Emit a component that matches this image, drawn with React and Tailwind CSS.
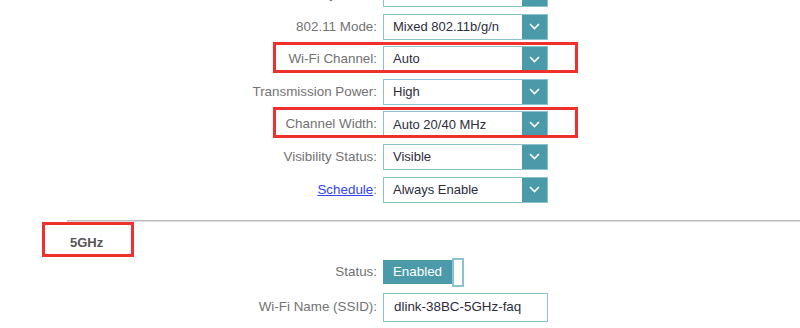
// App.jsx — router wireless settings fragment
const TEAL = 'bg-[#4a9aa9]';

function Chevron() {
  return (
    <svg width="11" height="7" viewBox="0 0 11 7" fill="none">
      <path d="M1 1l4.5 4.5L10 1" stroke="#fff" strokeWidth="1.6" />
    </svg>
  );
}

function Select({ value }) {
  return (
    <div className="flex h-[26px] w-[165px] border border-[#8cc2cb] bg-white">
      <div className="flex flex-1 items-center pl-[9px] text-[13px] text-[#2d2d3d]">{value}</div>
      <div className={`flex w-[25px] items-center justify-center ${TEAL}`}>
        <Chevron />
      </div>
    </div>
  );
}

function Label({ children }) {
  return <div className="w-[378px] pr-[1px] text-right text-[13.4px] text-[#727272]">{children}</div>;
}

function Row({ label, children, link, boxed }) {
  return (
    <div className="relative flex items-center">
      <Label>
        {link ? (
          <>
            <span className="text-[#3344ee] underline">{label}</span>:
          </>
        ) : (
          label
        )}
      </Label>
      <div className="ml-[5px]">{children}</div>
      {boxed && (
        <div className="absolute left-[273px] top-[-4px] h-[31px] w-[305px] border-[3px] border-[#f0302a]" />
      )}
    </div>
  );
}

export default function App() {
  return (
    <div className="h-[328px] w-[800px] overflow-hidden bg-white font-['Liberation_Sans',Arial,sans-serif]">
      <div className="-mt-[19px] flex flex-col gap-[6.6px]">
        <Row label="Security Mode:">
          <Select value="" />
        </Row>
        <Row label="802.11 Mode:">
          <Select value="Mixed 802.11b/g/n" />
        </Row>
        <Row label="Wi-Fi Channel:" boxed>
          <Select value="Auto" />
        </Row>
        <Row label="Transmission Power:">
          <Select value="High" />
        </Row>
        <Row label="Channel Width:" boxed>
          <Select value="Auto 20/40 MHz" />
        </Row>
        <Row label="Visibility Status:">
          <Select value="Visible" />
        </Row>
        <Row label="Schedule" link>
          <Select value="Always Enable" />
        </Row>
      </div>

      <div className="ml-[67px] mt-[17px] h-[2px] border-t border-b border-t-[#bdbdbd] border-b-[#dcdcdc]" />

      <div className="relative ml-[42px] mt-0 h-[35px] w-[92px] border-[3px] border-[#f0302a]">
        <div className="pl-[25px] pt-[11px] text-[13px] font-bold leading-[13px] text-[#555]">5GHz</div>
      </div>

      <div className="mt-[1px] flex flex-col gap-[6px]">
        <div className="flex items-center">
          <Label>Status:</Label>
          <div className="ml-[5px] flex items-center">
            <div className={`flex h-[24px] w-[69px] items-center justify-center text-[13.4px] text-white ${TEAL}`}>
              Enabled
            </div>
            <div className="h-[29px] w-[12px] border-2 border-[#8cc2cb] bg-white" />
          </div>
        </div>
        <div className="flex items-center">
          <Label>Wi-Fi Name (SSID):</Label>
          <div className="ml-[5px] flex h-[29px] w-[165px] items-center border border-[#8cc2cb] pl-[10px] text-[13.4px] text-[#2d2d3d]">
            dlink-38BC-5GHz-faq
          </div>
        </div>
        <div className="flex items-start">
          <div className="w-[378px]" />
          <div className="ml-[5px] h-[28px] w-[165px] border border-[#8cc2cb]" />
        </div>
      </div>
    </div>
  );
}
